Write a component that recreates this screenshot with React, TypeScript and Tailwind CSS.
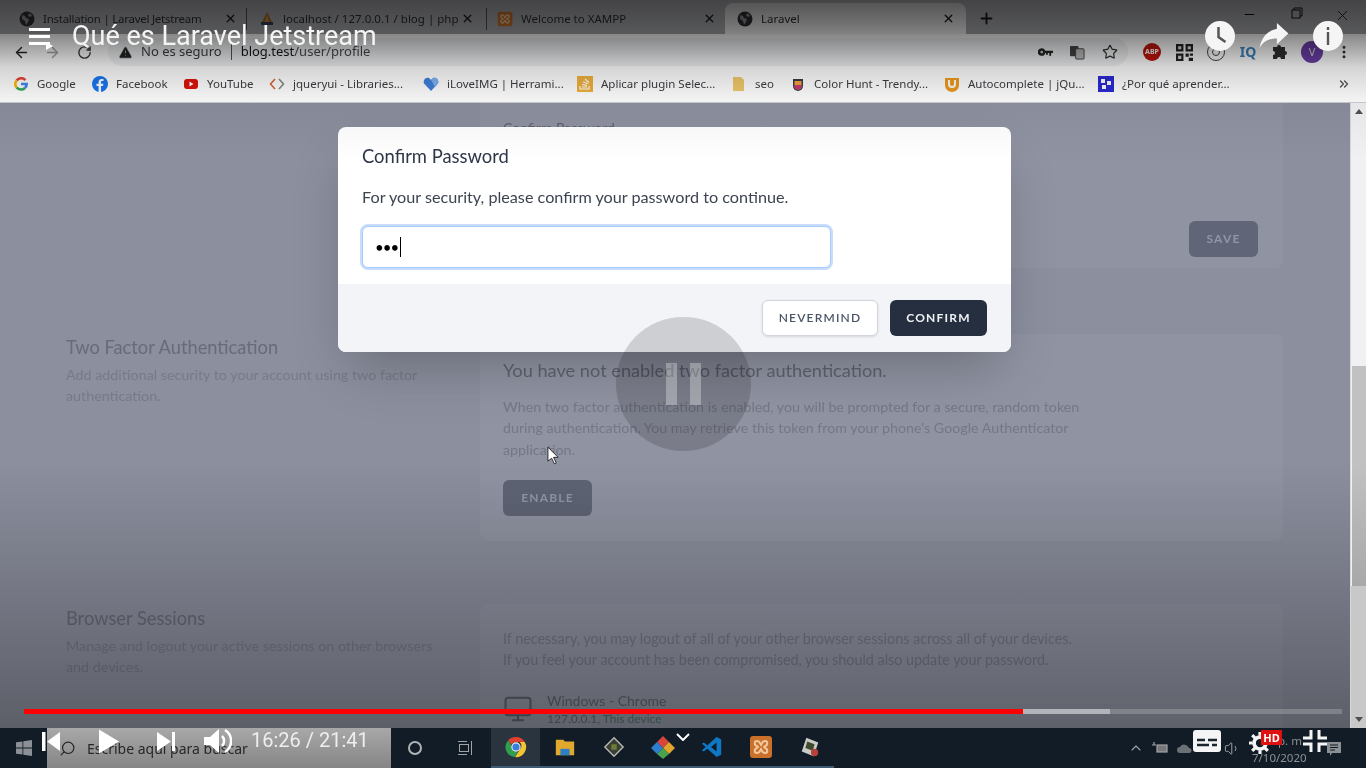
import { ChevronUp, Plus, X, Minus, Star, RotateCw, ArrowLeft, ArrowRight, EllipsisVertical, ChevronsRight, Monitor, Search, Volume1, TriangleAlert } from "lucide-react";

const chromeUi = "font-['Noto_Sans',sans-serif]";
const pageFont = "font-['Lato','Noto_Sans',sans-serif]";

function Globe() {
  return (
    <svg viewBox="0 0 16 16" className="w-4 h-4 shrink-0">
      <circle cx="8" cy="8" r="7.5" fill="#2c2d30" />
      <path d="M3 4l3 1 1 2 3 1-1 3-2 3-1-4-3-2zM10 2l3 2-1 2-3-1z" fill="#8b8c90" />
    </svg>
  );
}

function Pma() {
  return (
    <svg viewBox="0 0 16 16" className="w-4 h-4 shrink-0">
      <path d="M8 1l5 10H3z" fill="#a0682c" />
      <path d="M8 3l2 8H6z" fill="#c98f3e" />
      <rect x="2" y="11" width="12" height="3" fill="#33405e" />
    </svg>
  );
}

function Xampp({ className }: { className: string }) {
  return (
    <svg viewBox="0 0 24 24" className={className}>
      <rect x="1" y="1" width="22" height="22" rx="3" fill="#c9702a" />
      <path d="M8 6c-3 0-3 4 0 5l1 1-1 1c-3 1-3 5 0 5s3-3 4-4c1 1 1 4 4 4s3-4 0-5l-1-1 1-1c3-1 3-5 0-5s-3 3-4 4c-1-1-1-4-4-4z" fill="none" stroke="#f0c79e" strokeWidth="2" />
    </svg>
  );
}

function Tab({ icon, label, className }: { icon: React.ReactNode; label: string; className: string }) {
  return (
    <div className={`flex items-center h-full shrink-0 ${className}`}>
      {icon}
      <span className="ml-2 flex-1 text-[11.5px] text-[#2b2c2f] whitespace-nowrap overflow-hidden">{label}</span>
      <X size={13} strokeWidth={2.6} className="text-[#1c1d20] shrink-0" />
    </div>
  );
}

function TabStrip() {
  return (
    <div className={`${chromeUi} h-[34px] bg-[#a8a9ae] flex items-end shrink-0`}>
      <div className="h-[31px] flex items-center w-[970px] shrink-0">
        <Tab icon={<Globe />} label="Installation | Laravel Jetstream" className="w-[246px] pl-[19px] pr-[9px] [&>span]:tracking-[-0.25px]" />
        <div className="w-px h-[22px] bg-[#4a4b4f] shrink-0" />
        <Tab icon={<Pma />} label="localhost / 127.0.0.1 / blog | php" className="w-[239px] pl-[12px] pr-[12px]" />
        <div className="w-px h-[22px] bg-[#4a4b4f] shrink-0" />
        <Tab icon={<Xampp className="w-4 h-4 shrink-0" />} label="Welcome to XAMPP" className="w-[238px] pl-[10px] pr-[9px]" />
        <Tab icon={<Globe />} label="Laravel" className="w-[241px] bg-[linear-gradient(to_bottom,#d0d0d2,#f6f6f8)] rounded-t-lg pl-[12px] pr-[11px]" />
        <Plus size={17} strokeWidth={2.6} className="text-[#17181a] ml-[12px] shrink-0" />
      </div>
      <div className="flex-1 flex items-start h-full pt-[7px] text-[#111]">
        <Minus size={15} strokeWidth={1.6} className="ml-[272px] shrink-0" />
        <svg viewBox="0 0 12 12" className="w-[12px] h-[12px] ml-[34px] shrink-0" fill="none" stroke="#111" strokeWidth="1">
          <rect x="1" y="3" width="8" height="8" />
          <path d="M3 3V1h8v8H9" />
        </svg>
        <X size={17} strokeWidth={1.2} className="ml-[31px] shrink-0" />
      </div>
    </div>
  );
}

function QrIcon() {
  return (
    <svg viewBox="0 0 16 16" className="w-[17px] h-[17px]">
      <path d="M0 0h7v7H0zM9 0h7v7H9zM0 9h7v7H0z" fill="#222" />
      <path d="M2 2h3v3H2zM11 2h3v3h-3zM2 11h3v3H2z" fill="#ddd" />
      <path d="M9 9h3v3H9zM13 9h3v2h-3zM12 13h4v3h-4z" fill="#222" />
    </svg>
  );
}

function ToolIcon({ children }: { children: React.ReactNode }) {
  return <div className="w-[32px] flex items-center justify-center shrink-0">{children}</div>;
}

function Toolbar() {
  return (
    <div className={`${chromeUi} h-[34px] pt-[2px] bg-white flex items-center shrink-0 pl-[13px]`}>
      <ArrowLeft size={17} strokeWidth={2} className="text-[#26272a] shrink-0" />
      <ArrowRight size={17} strokeWidth={2} className="text-[#a6a6a6] ml-[14px] shrink-0" />
      <RotateCw size={15} strokeWidth={2.2} className="text-[#3a3b3d] ml-[16px] shrink-0" />
      <div className="ml-[16px] w-[1020px] h-[28px] rounded-full bg-[#f1f3f4] flex items-center pl-[10px] pr-[10px] shrink-0 text-[13px]">
        <TriangleAlert size={15} fill="#222" strokeWidth={1} className="text-[#ddd] shrink-0" />
        <span className="ml-[8px] text-[#3d3e42]">No es seguro</span>
        <span className="w-px h-[16px] bg-[#55565a] ml-[9px]" />
        <span className="ml-[9px] text-[#141518]">blog.test</span>
        <span className="text-[#4a4b50]">/user/profile</span>
        <div className="ml-auto flex items-center gap-[17px]">
          <svg viewBox="0 0 16 9" className="w-[15px] h-[9px]" fill="#222">
            <path d="M4 0a4 4 0 0 1 3.700 2.500H16v2.500h-2v3h-2V5h-1.500v2h-2V5H7.700A4 4 0 1 1 4 0z" />
            <circle cx="4" cy="4" r="1.500" fill="#ccc" />
          </svg>
          <svg viewBox="0 0 16 16" className="w-[15px] h-[15px]">
            <rect x="0" y="1" width="9" height="11" rx="1" fill="#444" />
            <rect x="6" y="4" width="9" height="11" rx="1" fill="#bbb" stroke="#444" />
          </svg>
          <Star size={16} strokeWidth={1.8} className="text-[#333]" />
        </div>
      </div>
      <div className="ml-[8px] flex items-center">
        <ToolIcon>
          <div className="w-[18px] h-[18px] rounded-full bg-[#c0150c] flex items-center justify-center text-[7px] font-bold text-white">ABP</div>
        </ToolIcon>
        <ToolIcon>
          <QrIcon />
        </ToolIcon>
        <ToolIcon>
          <div className="w-[18px] h-[18px] rounded-full border border-[#444] flex items-center justify-center">
            <div className="w-[8px] h-[8px] rounded-full border border-[#444]" />
          </div>
        </ToolIcon>
        <ToolIcon>
          <span className="text-[14px] font-bold text-[#3f85c0] leading-none">IQ</span>
        </ToolIcon>
        <ToolIcon>
          <svg viewBox="0 0 16 16" className="w-[16px] h-[16px]" fill="#2f2f31">
            <path d="M5 3a2 2 0 0 1 4 0h4v4a2 2 0 0 1 0 4v4H9a2 2 0 0 0-4 0H1v-4a2 2 0 0 0 0-4V3z" />
          </svg>
        </ToolIcon>
        <ToolIcon>
          <div className="w-[22px] h-[22px] rounded-full bg-[#6b3fa8] flex items-center justify-center text-[11px] text-[#ddd]">V</div>
        </ToolIcon>
        <ToolIcon>
          <EllipsisVertical size={16} strokeWidth={2.5} className="text-[#333]" />
        </ToolIcon>
      </div>
    </div>
  );
}

function Bookmark({ icon, label, className }: { icon: React.ReactNode; label: string; className: string }) {
  return (
    <div className={`flex items-center shrink-0 ${className}`}>
      <span className="w-[16px] h-[16px] flex items-center justify-center shrink-0">{icon}</span>
      <span className="ml-[8px] text-[11.5px] text-[#3b3c40] whitespace-nowrap">{label}</span>
    </div>
  );
}

function BookmarkBar() {
  return (
    <div className={`${chromeUi} h-[35px] pb-[2px] bg-white flex items-center shrink-0 pl-[13px] border-b border-[#cfd0d4]`}>
      <Bookmark
        className="w-[79px]"
        label="Google"
        icon={
          <svg viewBox="0 0 16 16" className="w-[14px] h-[14px]" fill="none" strokeWidth="3">
            <path d="M13 3.5A6.5 6.5 0 0 0 3 4" stroke="#ea4335" />
            <path d="M3 4a6.5 6.5 0 0 0 0 8" stroke="#fbbc05" />
            <path d="M3 12a6.5 6.5 0 0 0 9.500 .5" stroke="#34a853" />
            <path d="M12.500 12.500A6 6 0 0 0 14.500 8H8" stroke="#4285f4" />
          </svg>
        }
      />
      <Bookmark
        className="w-[91px]"
        label="Facebook"
        icon={
          <svg viewBox="0 0 16 16" className="w-4 h-4">
            <circle cx="8" cy="8" r="8" fill="#1877f2" />
            <path d="M9 16v-6h2l.4-2.300H9V6.300c0-.7.3-1.200 1.300-1.200h1.200v-2C11 3 10.300 3 9.700 3 7.800 3 6.600 4.100 6.600 6v1.700H4.500V10h2.100v6z" fill="#fff" />
          </svg>
        }
      />
      <Bookmark
        className="w-[86px]"
        label="YouTube"
        icon={
          <svg viewBox="0 0 16 16" className="w-4 h-4">
            <rect x="1" y="3" width="14" height="10" rx="3" fill="#e0120b" />
            <path d="M6.500 5.500v5l4-2.500z" fill="#fff" />
          </svg>
        }
      />
      <Bookmark
        className="w-[154px]"
        label="jqueryui - Libraries..."
        icon={
          <svg viewBox="0 0 16 16" className="w-4 h-4" fill="none" strokeWidth="1.600">
            <path d="M6 3L1.500 8 6 13" stroke="#d9633a" />
            <path d="M10 3l4.500 5-4.500 5" stroke="#888" />
          </svg>
        }
      />
      <Bookmark
        className="w-[154px]"
        label="iLoveIMG | Herrami..."
        icon={
          <svg viewBox="0 0 16 16" className="w-4 h-4">
            <path d="M8 15L1 7.500C-.5 4 3 .5 6 2l2 2 2-2c3-1.500 6.500 2 5 5.500z" fill="#3f7fdc" />
            <path d="M8 4l2-2c3-1.500 6.500 2 5 5.500L12 11z" fill="#7fb0f2" />
          </svg>
        }
      />
      <Bookmark
        className="w-[154px]"
        label="Aplicar plugin Selec..."
        icon={
          <svg viewBox="0 0 16 16" className="w-4 h-4">
            <rect width="16" height="16" fill="#f0b13c" />
            <path d="M3 10v3h9v-3M5 11h5M5 8.500l5 .8M6 5.800l5 2M8 3l4 3.500" fill="none" stroke="#fff" strokeWidth="1.200" />
          </svg>
        }
      />
      <Bookmark
        className="w-[59px]"
        label="seo"
        icon={
          <svg viewBox="0 0 16 16" className="w-4 h-4">
            <path d="M2 1h8l3 3v11H2z" fill="#f1c96a" />
          </svg>
        }
      />
      <Bookmark
        className="w-[154px]"
        label="Color Hunt - Trendy..."
        icon={
          <svg viewBox="0 0 16 16" className="w-4 h-4">
            <path d="M3 3h10v7a5 5 0 0 1-10 0z" fill="#3c3a48" />
            <path d="M4.500 5h7v5a3.500 3.500 0 0 1-7 0z" fill="#f5a33b" />
            <path d="M4.500 9h7v1a3.500 3.500 0 0 1-7 0z" fill="#c8387a" />
          </svg>
        }
      />
      <Bookmark
        className="w-[154px]"
        label="Autocomplete | jQu..."
        icon={
          <svg viewBox="0 0 16 16" className="w-4 h-4">
            <path d="M1 2h14v7a7 7 0 0 1-14 0z" fill="#f09a1e" />
            <path d="M5 4v4a3 3 0 0 0 6 0V4" fill="none" stroke="#fff" strokeWidth="2" />
          </svg>
        }
      />
      <Bookmark
        className="w-[239px]"
        label="¿Por qué aprender..."
        icon={
          <svg viewBox="0 0 16 16" className="w-4 h-4">
            <rect width="16" height="16" fill="#2a2ad4" />
            <path d="M3 3h4v4H3zM9 5h4v4H9zM4 9h4v4H4z" fill="#fff" />
          </svg>
        }
      />
      <ChevronsRight size={14} strokeWidth={2.4} className="text-[#555]" />
    </div>
  );
}

function SideText({ title, className, children }: { title: string; className: string; children: React.ReactNode }) {
  return (
    <div className={`${pageFont} ${className}`}>
      <h2 className="text-[18.3px] leading-[28px] text-[#686b79]">{title}</h2>
      <p className="mt-[3px] text-[14.3px] leading-[21px] text-[#777a88]">{children}</p>
    </div>
  );
}

function PageContent() {
  return (
    <div className="flex-1 flex min-h-0 overflow-hidden">
      <main className={`${pageFont} flex-1 bg-[#8c8f9e] pl-[66px] flex flex-col gap-[66px]`}>
        <div className="grid grid-cols-[414px_803px] h-[165px] shrink-0">
          <div />
          <section className="bg-[#9093a2] rounded-b-lg flex flex-col pl-[23px] pr-[25px] pb-[11px] pt-[15px]">
            <div className="text-[14px] leading-[20px] text-[#5c5f6c]">Confirm Password</div>
            <button className="mt-auto self-end w-[69px] h-[36px] rounded-md bg-[#606577] text-[12px] font-bold tracking-widest text-[#9296a6]">SAVE</button>
          </section>
        </div>
        <div className="grid grid-cols-[414px_803px] shrink-0">
          <SideText title="Two Factor Authentication" className="-mt-px">
            Add additional security to your account using two factor
            <br />
            authentication.
          </SideText>
          <section className="bg-[#9093a2] rounded-lg h-[207px] pl-[23px] pt-[22px]">
            <h3 className="text-[18.2px] leading-[28px] text-[#5f6270]">You have not enabled two factor authentication.</h3>
            <p className="mt-3 text-[14.25px] leading-[21.3px] text-[#747785]">
              When two factor authentication is enabled, you will be prompted for a secure, random token
              <br />
              during authentication. You may retrieve this token from your phone's Google Authenticator
              <br />
              application.
            </p>
            <button className="mt-[20px] w-[89px] h-[36px] rounded-md bg-[#5f6475] text-[12px] font-bold tracking-widest text-[#9296a6]">ENABLE</button>
          </section>
        </div>
        <div className="grid grid-cols-[414px_803px] shrink-0 -mt-[3px]">
          <SideText title="Browser Sessions" className="mt-0">
            Manage and logout your active sessions on other browsers
            <br />
            and devices.
          </SideText>
          <section className="bg-[#9093a2] rounded-t-lg h-[140px] pl-[23px] pt-[24px]">
            <p className="text-[14.35px] leading-[21px] text-[#747785]">
              If necessary, you may logout of all of your other browser sessions across all of your devices.
              <br />
              If you feel your account has been compromised, you should also update your password.
            </p>
            <div className="mt-[21px] flex items-start">
              <Monitor size={30} strokeWidth={1.6} className="text-[#5c5f6c] mt-[3px]" />
              <div className="ml-[14px]">
                <div className="text-[14px] leading-[19px] text-[#5f6270]">Windows - Chrome</div>
                <div className="text-[12px] leading-[18px] text-[#5f6270]">
                  127.0.0.1, <span className="text-[#4b7468]">This device</span>
                </div>
              </div>
            </div>
          </section>
        </div>
      </main>
      <aside className="w-[16px] bg-[#f1f1f4] flex flex-col items-center shrink-0 border-l border-[#d8d8dc]">
        <div className="h-[17px] flex items-center justify-center">
          <div className="border-x-[4px] border-x-transparent border-b-[5px] border-b-[#505050]" />
        </div>
        <div className="h-[246px]" />
        <div className="w-[14px] h-[220px] bg-[linear-gradient(to_bottom,#c1c1c1,#c1c1c1_45%,#a8a8a8)]" />
        <div className="flex-1 self-stretch bg-[#c8c8c8] flex flex-col items-center justify-end">
          <div className="h-[17px] flex items-center justify-center">
            <div className="border-x-[4px] border-x-transparent border-t-[5px] border-t-[#505050]" />
          </div>
        </div>
      </aside>
    </div>
  );
}

function ChromeLogo() {
  return (
    <svg viewBox="0 0 24 24" className="w-[22px] h-[22px]">
      <path d="M12 1a11 11 0 0 1 9.500 5.500H12a5.500 5.500 0 0 0-5 3L3.500 4.500A11 11 0 0 1 12 1z" fill="#e0402f" />
      <path d="M21.500 6.500A11 11 0 0 1 11 23l5-8a5.500 5.500 0 0 0 0-8.500z" fill="#f5c431" />
      <path d="M3.500 4.500L8 12a5 5 0 0 0 6 5l-3 6A11 11 0 0 1 3.500 4.500z" fill="#2f9e4f" />
      <circle cx="12" cy="12" r="4.500" fill="#3a7fe0" stroke="#eee" strokeWidth="1.200" />
    </svg>
  );
}

function Taskbar() {
  const apps = [
    <ChromeLogo key="chrome" />,
    <svg key="folder" viewBox="0 0 24 24" className="w-[22px] h-[22px]">
      <path d="M2 4h8l2 2h10v15H2z" fill="#e0a92e" />
      <rect x="7" y="14" width="10" height="7" fill="#2d7fc4" />
    </svg>,
    <svg key="sublime" viewBox="0 0 24 24" className="w-[22px] h-[22px]">
      <path d="M12 2l10 10-10 10L2 12z" fill="#3a3d36" stroke="#b9bab0" strokeWidth="1.500" />
      <rect x="9" y="9" width="6" height="6" fill="#6d7c34" />
    </svg>,
    <svg key="git" viewBox="0 0 24 24" className="w-[24px] h-[24px]">
      <path d="M12 1l6 6-6 6-6-6z" fill="#d8453a" />
      <path d="M6 7l6 6-6 6-6-6z" fill="#2f7fd0" />
      <path d="M18 7l6 6-6 6-6-6z" fill="#e2a42c" />
      <path d="M12 13l6 6-6 5-6-5z" fill="#4aa24f" />
    </svg>,
    <svg key="vscode" viewBox="0 0 24 24" className="w-[22px] h-[24px]">
      <path d="M17 1l5 2.500v17L17 23 7 14l-4 3-2-1.500L5 12 1 8.500 3 7l4 3z" fill="#0f77c4" />
      <path d="M17 7l-6 5 6 5z" fill="#101a25" />
    </svg>,
    <Xampp key="xampp" className="w-[24px] h-[24px]" />,
    <svg key="last" viewBox="0 0 24 24" className="w-[22px] h-[22px]">
      <path d="M8 2l13 5-5 15-13-5z" fill="#c9cbc6" />
      <path d="M9 6l8 3-2 7-8-3z" fill="#3e4a2c" />
      <circle cx="17" cy="18" r="4" fill="#b6403a" />
    </svg>,
  ];
  return (
    <div className={`${chromeUi} h-[40px] bg-[#111c27] flex items-center shrink-0 relative`}>
      <div className="w-[47px] flex justify-center shrink-0">
        <svg viewBox="0 0 16 16" className="w-[16px] h-[16px]" fill="#8c9094">
          <path d="M0 2.300l6.500-.9v6.200H0zM7.300 1.300L16 0v7.600H7.300zM0 8.400h6.500v6.200L0 13.700zM7.300 8.400H16V16l-8.700-1.200z" />
        </svg>
      </div>
      <div className="w-[344px] h-full bg-[linear-gradient(to_bottom,#a8a8a8,#858585)] flex items-center pl-[12px] shrink-0">
        <Search size={17} strokeWidth={1.600} className="text-[#222] -scale-x-100" />
        <span className="ml-[11px] text-[14px] text-[#26272a]">Escribe aquí para buscar</span>
      </div>
      <div className="w-[48px] flex justify-center shrink-0">
        <div className="w-[14px] h-[14px] rounded-full border-2 border-[#b0b3b6]" />
      </div>
      <div className="w-[52px] flex justify-center shrink-0">
        <svg viewBox="0 0 16 16" className="w-[16px] h-[16px]" fill="none" stroke="#a0a3a6" strokeWidth="1">
          <rect x="2.500" y="4.500" width="9" height="7" />
          <path d="M1 1.500h9M1 14.500h9M14.500 1v14" />
        </svg>
      </div>
      <div className="flex items-center h-full">
        {apps.map((app, i) => (
          <div key={i} className={`w-[49px] h-full flex items-center justify-center border-b-2 border-[#3f5a73] ${i === 0 ? "bg-[#2a343e]" : ""}`}>
            {app}
          </div>
        ))}
      </div>
      <div className="flex-1 flex items-center h-full pl-[294px] text-[#a0a3a6]">
        <ChevronUp size={16} strokeWidth={1.6} className="shrink-0" />
        <svg viewBox="0 0 16 16" className="w-[16px] h-[16px] ml-[8px] shrink-0" fill="none" stroke="#a0a3a6" strokeWidth="1.200">
          <rect x="5" y="5" width="10" height="7" fill="#777" />
          <path d="M0 5h4M2 2v3" />
        </svg>
        <svg viewBox="0 0 16 12" className="w-[16px] h-[12px] ml-[8px] shrink-0" fill="#6d7175">
          <path d="M4 11a3 3 0 0 1 0-6 5 5 0 0 1 9 1 2.500 2.500 0 0 1 0 5z" />
        </svg>
        <Volume1 size={17} strokeWidth={1.4} className="ml-[32px] shrink-0" />
        <div className="ml-[11px] w-[53px] shrink-0 text-center text-[11.5px] leading-[17px] text-[#8c9094] mt-[1px]">
          <div className="text-right">p. m.</div>
          <div>7/10/2020</div>
        </div>
        <svg viewBox="0 0 16 16" className="w-[16px] h-[16px] ml-[21px] mt-[2px] shrink-0" fill="#8c9094">
          <path d="M1 1h14v11H6l-2 3v-3H1z" />
          <path d="M4 4h8M4 6.500h8M4 9h5" stroke="#111c27" />
        </svg>
      </div>
    </div>
  );
}

function ConfirmModal() {
  return (
    <div className={`${pageFont} absolute left-[338px] top-[127px] w-[673px] h-[225px] rounded-lg bg-white shadow-2xl flex flex-col overflow-hidden`}>
      <div className="flex-1 px-6 pt-[16px]">
        <h2 className="text-[18.4px] leading-[26px] text-[#2d3748]">Confirm Password</h2>
        <p className="mt-[17px] text-[16.2px] leading-[22px] text-[#3d4451]">For your security, please confirm your password to continue.</p>
        <div className="mt-[18px] w-[469px] h-[42px] rounded-md bg-white border border-[#a4cafe] ring-2 ring-[#c9ddfb] flex items-center pl-[12px]">
          <span className="text-[15px] leading-none tracking-[-1px] text-black">•••</span>
          <span className="w-px h-[20px] bg-black ml-[2px]" />
        </div>
      </div>
      <div className="h-[68px] bg-[#f3f4f8] px-6 flex items-center justify-end shrink-0">
        <button className="w-[116px] h-[36px] rounded-md bg-white border border-[#d2d6dc] shadow-sm text-[12px] font-semibold tracking-widest text-[#4a5568]">NEVERMIND</button>
        <button className="ml-3 w-[97px] h-[36px] rounded-md bg-[#252f3f] text-[12px] font-bold tracking-widest text-[#f0f2f5]">CONFIRM</button>
      </div>
    </div>
  );
}

function PlayerOverlay() {
  return (
    <>
      <div className="absolute inset-x-0 top-0 h-[160px] pointer-events-none bg-[linear-gradient(to_bottom,rgba(0,0,0,.6)_0%,rgba(0,0,0,.48)_21%,rgba(0,0,0,.17)_42%,rgba(0,0,0,.05)_62%,rgba(0,0,0,0)_100%)]" />
      <div className="absolute left-0 right-[16px] top-[460px] h-[268px] pointer-events-none bg-[linear-gradient(to_bottom,rgba(0,0,0,0),rgba(0,0,0,.34))]" />

      {/* top of player */}
      <div className="absolute left-[29px] top-[28px] w-[21px] flex flex-col gap-[4px]">
        <div className="h-[3px] bg-white" />
        <div className="h-[3px] bg-white" />
        <div className="h-[3px] bg-white" />
      </div>
      <div className="absolute left-[46px] top-[42px] border-y-[4px] border-y-transparent border-l-[7px] border-l-white" />
      <div className="absolute left-[72px] top-[19px] font-['Roboto',sans-serif] text-[27px] leading-[34px] text-[#f4f4f4] whitespace-nowrap">Qué es Laravel Jetstream</div>

      <svg viewBox="0 0 30 30" className="absolute left-[1205px] top-[21px] w-[30px] h-[30px]">
        <circle cx="15" cy="15" r="15" fill="#f5f5f5" />
        <path d="M13.500 6v10l7 5" fill="none" stroke="#555" strokeWidth="2.500" />
      </svg>
      <svg viewBox="0 0 30 26" className="absolute left-[1259px] top-[23px] w-[30px] h-[25px]">
        <path d="M18 0l12 11-12 11v-6C10 16 4 19 0 26 2 15 8 8 18 6z" fill="#f5f5f5" />
      </svg>
      <svg viewBox="0 0 30 30" className="absolute left-[1313px] top-[21px] w-[30px] h-[30px]">
        <circle cx="15" cy="15" r="15" fill="#f5f5f5" />
        <rect x="13.800" y="6" width="2.400" height="3" fill="#555" />
        <rect x="13.800" y="11" width="2.400" height="13" fill="#555" />
      </svg>

      {/* pause flash */}
      <div className="absolute left-[616px] top-[317px] w-[135px] h-[134px] rounded-full bg-black/15 flex items-start justify-center pt-[46px] gap-[13px]">
        <div className="w-[11px] h-[42px] bg-white/30" />
        <div className="w-[11px] h-[42px] bg-white/30" />
      </div>

      {/* mouse pointer */}
      <svg viewBox="0 0 14 20" className="absolute left-[547px] top-[446px] w-[13px] h-[19px]">
        <path d="M1 1v15l4-3 3 6 2-1-3-6h5z" fill="#fff" stroke="#222" strokeWidth="1" />
      </svg>

      {/* progress bar */}
      <div className="absolute left-[24px] top-[709px] w-[1318px] h-[5px] bg-white/20 flex">
        <div className="w-[999px] bg-[#ff0000]" />
        <div className="w-[87px] bg-[#b3b4ba]" />
      </div>

      {/* small chevron of the chapter menu */}
      <svg viewBox="0 0 14 8" className="absolute left-[676px] top-[733px] w-[14px] h-[8px]" fill="none" stroke="#fff" strokeWidth="2">
        <path d="M1 1l6 6 6-6" />
      </svg>

      {/* controls */}
      <div className="absolute left-[42px] top-[729px] right-[39px] h-[24px] flex items-center text-white">
        <svg viewBox="0 0 18 19" className="w-[18px] h-[19px] shrink-0" fill="#fff">
          <rect x="0" y="0" width="3.500" height="19" />
          <path d="M5 9.500L18 0v19z" />
        </svg>
        <svg viewBox="0 0 20 24" className="w-[20px] h-[25px] ml-[39px] shrink-0" fill="#fff">
          <path d="M0 0l20 12L0 24z" />
        </svg>
        <svg viewBox="0 0 18 19" className="w-[18px] h-[19px] ml-[38px] shrink-0" fill="#fff">
          <path d="M0 0l14 9.500L0 19z" />
          <rect x="15" y="0" width="3" height="19" />
        </svg>
        <svg viewBox="0 0 28 26" className="w-[28px] h-[26px] ml-[29px] shrink-0" fill="none">
          <path d="M0 9h6l9-8v24l-9-8H0z" fill="#fff" />
          <path d="M18 8a7 7 0 0 1 0 10" stroke="#fff" strokeWidth="2.500" />
          <path d="M21 2a13 13 0 0 1 0 22" stroke="#fff" strokeWidth="2.500" />
        </svg>
        <span className="ml-[19px] font-['Roboto',sans-serif] text-[20px] text-[#eeeeee] whitespace-nowrap -mt-[2px]">16:26 / 21:41</span>
        <div className="ml-auto flex items-center">
          <svg viewBox="0 0 28 22" className="w-[28px] h-[22px] shrink-0">
            <rect width="28" height="22" rx="3" fill="#f5f5f5" />
            <path d="M4 10h8M15 10h9M4 15h12M19 15h5" stroke="#1a2530" strokeWidth="2.500" />
          </svg>
          <div className="relative ml-[28px] w-[22px] h-[22px] shrink-0">
            <svg viewBox="0 0 24 24" className="w-[22px] h-[22px] mt-[2px]" fill="none">
              <circle cx="12" cy="12" r="6.500" stroke="#f5f5f5" strokeWidth="4" />
              <path d="M12 0v4M12 20v4M0 12h4M20 12h4M3.500 3.500l3 3M17.500 17.500l3 3M3.500 20.500l3-3M17.500 6.500l3-3" stroke="#f5f5f5" strokeWidth="3.500" />
            </svg>
            <span className="absolute left-[12px] top-0 w-[21px] h-[15px] bg-[#e01010] text-[11px] leading-[15px] font-bold text-center text-white">HD</span>
          </div>
          <svg viewBox="0 0 24 22" className="w-[24px] h-[22px] ml-[32px] shrink-0" fill="none" stroke="#f5f5f5" strokeWidth="3">
            <path d="M8 0v8H0M16 0v8h8M8 22v-8H0M16 22v-8h8" />
          </svg>
        </div>
      </div>
    </>
  );
}

export default function App() {
  return (
    <div className="relative w-[1366px] h-[768px] overflow-hidden flex flex-col bg-[#8c8f9e] blur-[0.4px]">
      <TabStrip />
      <Toolbar />
      <BookmarkBar />
      <PageContent />
      <Taskbar />
      <ConfirmModal />
      <PlayerOverlay />
    </div>
  );
}
